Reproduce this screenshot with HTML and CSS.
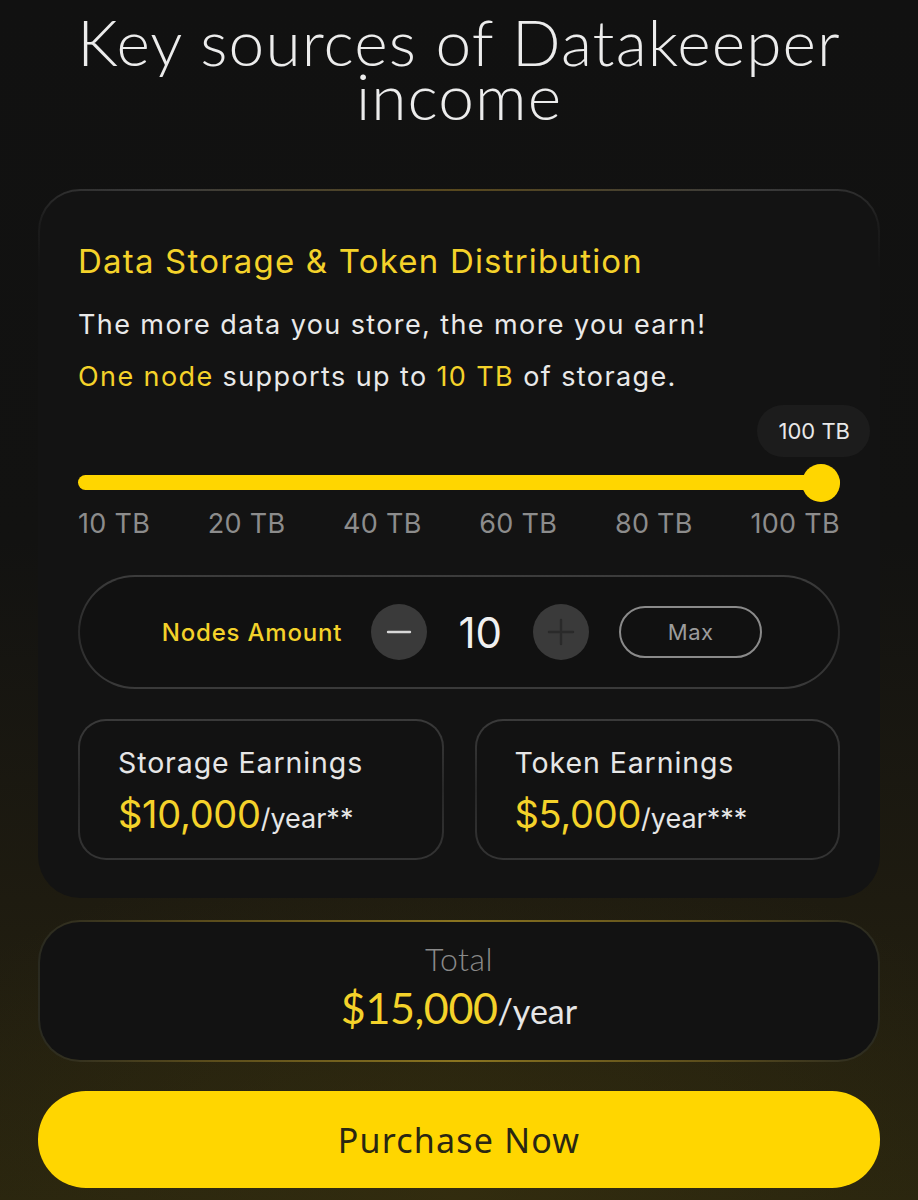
FILE: index.html
```html
<!DOCTYPE html>
<html lang="en">
<head>
<meta charset="utf-8">
<title>Key sources of Datakeeper income</title>
<link rel="stylesheet" href="styles.css">
</head>
<body>
<main class="page">
  <h1 class="title">Key sources of Datakeeper income</h1>

  <section class="card">
    <h2 class="card-title">Data Storage &amp; Token Distribution</h2>
    <p class="lead">The more data you store, the more you earn!</p>
    <p class="lead"><span class="hl">One node</span> supports up to <span class="hl">10 TB</span> of storage.</p>

    <div class="slider">
      <div class="tip-row"><span class="tip">100 TB</span></div>
      <div class="track"><span class="thumb"></span></div>
      <div class="ticks">
        <span>10 TB</span><span>20 TB</span><span>40 TB</span><span>60 TB</span><span>80 TB</span><span>100 TB</span>
      </div>
    </div>

    <div class="nodes">
      <span class="nodes-label">Nodes Amount</span>
      <button class="round minus" aria-label="decrease">
        <svg viewBox="0 0 56 56" width="56" height="56"><path d="M17 28h22" stroke="#d8d8d8" stroke-width="2.4" stroke-linecap="round"/></svg>
      </button>
      <span class="count">10</span>
      <button class="round plus" aria-label="increase">
        <svg viewBox="0 0 56 56" width="56" height="56"><path d="M16 28h24M28 16v24" stroke="#2a2a2a" stroke-width="2.4" stroke-linecap="round"/></svg>
      </button>
      <button class="max">Max</button>
    </div>

    <div class="earnings">
      <div class="earn">
        <div class="earn-title">Storage Earnings</div>
        <div class="earn-value"><span class="amt">$10,000</span>/year**</div>
      </div>
      <div class="earn">
        <div class="earn-title">Token Earnings</div>
        <div class="earn-value"><span class="amt">$5,000</span>/year***</div>
      </div>
    </div>
  </section>

  <section class="total">
    <div class="total-label">Total</div>
    <div class="total-value"><span class="amt">$15,000</span>/year</div>
  </section>

  <button class="purchase">Purchase Now</button>
</main>
</body>
</html>
```

FILE: styles.css
```css
* { box-sizing: border-box; }
html, body { margin: 0; padding: 0; }
body {
  width: 918px;
  min-height: 1200px;
  background: #111111;
  background-image:
    radial-gradient(ellipse 70% 30% at 50% 100%, rgba(60,52,14,0.5), rgba(0,0,0,0) 100%),
    linear-gradient(180deg, #111111 0%, #121211 45%, #1e1b10 75%, #28240f 100%);
  font-family: Inter, "Liberation Sans", sans-serif;
  color: #e6e6e6;
}
.page {
  padding: 15px 38px 0;
  display: flex;
  flex-direction: column;
}
.title {
  margin: 0;
  font-family: Lato, "Noto Sans", sans-serif;
  font-weight: 300;
  font-size: 64px;
  line-height: 54px;
  text-align: center;
  color: #ececec;
  letter-spacing: 1.1px;
  padding: 0 20px;
}
.card {
  margin-top: 66px;
  border-radius: 42px;
  border: 2px solid transparent;
  background:
    linear-gradient(#131313, #131313) padding-box,
    linear-gradient(180deg, rgba(19,19,19,0) 0px, rgba(19,19,19,0.6) 30px, #131313 80px) border-box,
    linear-gradient(90deg, #2c2c2c 0%, #3c3c3c 15%, #5a4a1e 50%, #3c3c3c 85%, #2c2c2c 100%) border-box;
  padding: 49px 38px 36px;
}
.card-title {
  margin: 0;
  font-weight: 400;
  font-size: 33px;
  line-height: 42px;
  color: #f4d22a;
  letter-spacing: 1.2px;
}
.lead {
  margin: 25px 0 0;
  font-size: 27px;
  line-height: 36px;
  color: #e9e9e9;
  letter-spacing: 1.4px;
}
.lead + .lead { margin-top: 16px; }
.hl { color: #f4d22a; }

.slider { margin-top: 10px; }
.tip-row { display: flex; justify-content: flex-end; margin-right: -30px; }
.tip {
  background: #1c1c1c;
  color: #e8e8e8;
  font-size: 22px;
  height: 52px;
  line-height: 52px;
  padding: 0 20px 0 22px;
  border-radius: 26px;
}
.track {
  position: relative;
  margin-top: 18px;
  height: 15px;
  border-radius: 8px;
  background: #ffd600;
}
.thumb {
  position: absolute;
  right: 0;
  top: 50%;
  width: 38px;
  height: 38px;
  margin-top: -19px;
  border-radius: 50%;
  background: #ffd600;
}
.ticks {
  display: flex;
  justify-content: space-between;
  margin-top: 18px;
  font-size: 27px;
  line-height: 32px;
  color: #8c8c8c;
  letter-spacing: 0.3px;
}

.nodes {
  margin-top: 35px;
  height: 114px;
  border-radius: 57px;
  border: 2px solid transparent;
  background:
    linear-gradient(#111111, #111111) padding-box,
    linear-gradient(180deg, #3c3c3c, #2a2a2a 50%, #3a3a3a) border-box;
  display: flex;
  align-items: center;
  justify-content: center;
  padding-left: 6px;
}
.nodes-label {
  color: #f4d22a;
  font-size: 24px;
  font-weight: 500;
  letter-spacing: 0.8px;
  margin-right: 29px;
}
.round {
  width: 56px;
  height: 56px;
  border-radius: 50%;
  border: 0;
  padding: 0;
  background: #3a3a3a;
  display: flex;
  align-items: center;
  justify-content: center;
}
.round svg { display: block; }
.count {
  font-size: 42px;
  color: #f0f0f0;
  width: 106px;
  text-align: center;
  font-weight: 400;
}
.max {
  margin-left: 30px;
  width: 143px;
  height: 52px;
  border-radius: 26px;
  border: 2px solid #8a8a8a;
  background: transparent;
  color: #9c9c9c;
  font-family: Inter, "Liberation Sans", sans-serif;
  font-size: 22px;
  letter-spacing: 0.5px;
}

.earnings {
  margin-top: 30px;
  display: grid;
  grid-template-columns: 1fr 1fr;
  gap: 31px;
}
.earn {
  height: 141px;
  border-radius: 28px;
  border: 2px solid transparent;
  background:
    linear-gradient(#121212, #121212) padding-box,
    linear-gradient(180deg, #3a3a3a, #282828 50%, #343434) border-box;
  padding: 23px 38px 0;
}
.earn-title {
  font-size: 28.5px;
  line-height: 38px;
  color: #e6e6e6;
  letter-spacing: 0.9px;
}
.earn-value {
  margin-top: 10px;
  font-size: 27px;
  line-height: 44px;
  color: #e6e6e6;
}
.earn-value .amt { font-size: 38px; letter-spacing: -0.3px; }
.amt { color: #f4d22a; }

.total {
  margin-top: 22px;
  height: 142px;
  border-radius: 42px;
  border: 2px solid transparent;
  background:
    linear-gradient(#121212, #121212) padding-box,
    linear-gradient(90deg, #2a2a20 0%, #5a4c1c 20%, #8a7420 50%, #5a4c1c 80%, #2a2a20 100%) border-box;
  display: flex;
  flex-direction: column;
  align-items: center;
  padding-top: 19px;
}
.total-label {
  font-family: Lato, "Noto Sans", sans-serif;
  font-weight: 300;
  font-size: 32px;
  line-height: 36px;
  color: #8a8a8a;
  letter-spacing: 0.5px;
}
.total-value {
  margin-top: 7px;
  font-family: Lato, "Noto Sans", sans-serif;
  font-size: 34px;
  line-height: 48px;
  color: #e6e6e6;
}
.total-value .amt { font-size: 43px; letter-spacing: -0.4px; }

.purchase {
  margin-top: 29px;
  height: 97px;
  border-radius: 48px;
  border: 0;
  background: #ffd600;
  color: #2a2712;
  font-family: "Noto Sans", sans-serif;
  font-size: 34px;
  letter-spacing: 1.2px;
}
```
